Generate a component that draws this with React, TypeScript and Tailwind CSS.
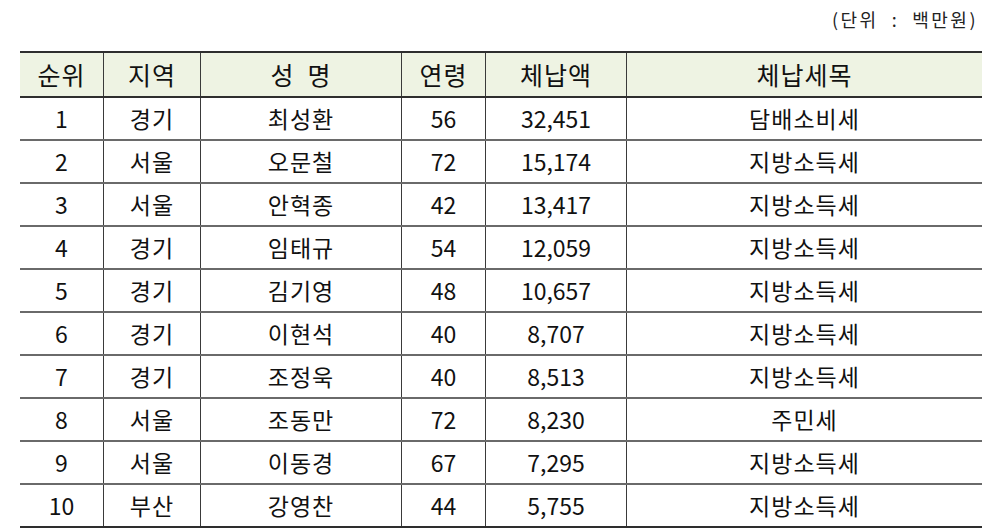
import React from "react";

const rows: [string, string, string, string, string, string][] = [
  ["1", "경기", "최성환", "56", "32,451", "담배소비세"],
  ["2", "서울", "오문철", "72", "15,174", "지방소득세"],
  ["3", "서울", "안혁종", "42", "13,417", "지방소득세"],
  ["4", "경기", "임태규", "54", "12,059", "지방소득세"],
  ["5", "경기", "김기영", "48", "10,657", "지방소득세"],
  ["6", "경기", "이현석", "40", "8,707", "지방소득세"],
  ["7", "경기", "조정욱", "40", "8,513", "지방소득세"],
  ["8", "서울", "조동만", "72", "8,230", "주민세"],
  ["9", "서울", "이동경", "67", "7,295", "지방소득세"],
  ["10", "부산", "강영찬", "44", "5,755", "지방소득세"],
];

const widths = ["w-[84px]", "w-[97px]", "w-[201px]", "w-[84px]", "w-[141px]", "flex-1"];
const korean = [false, true, true, false, false, true];

function Cell({ i, children, header }: { i: number; children: React.ReactNode; header?: boolean }) {
  return (
    <div
      className={`${widths[i]} ${i < 5 ? "border-r border-[#3a3a3a]" : ""} flex items-center justify-center ${
        header ? "text-[25px] tracking-[1px]" : korean[i] ? "text-[23px] tracking-[1px]" : "text-[23px]"
      }`}
    >
      {children}
    </div>
  );
}

export default function App() {
  const header = ["순위", "지역", "성\u00a0\u00a0명", "연령", "체납액", "체납세목"];
  return (
    <div
      className="w-[988px] h-[530px] bg-white text-[#111] overflow-hidden"
      style={{ fontFamily: '"Noto Sans CJK KR", "Noto Sans", sans-serif' }}
    >
      <div className="h-[51px] flex justify-end items-start pr-[10px] pt-[6px]">
        <span className="text-[18px] tracking-[2.5px] text-[#222]">(단위&nbsp;&nbsp;:&nbsp;&nbsp;백만원)</span>
      </div>
      <div className="ml-[20px] w-[962px] border-t-2 border-[#2e2e2e]">
        <div className="flex h-[45px] bg-[#eef3e3] border-b-2 border-[#2e2e2e] leading-none">
          {header.map((h, i) => (
            <Cell key={i} i={i} header>
              {h}
            </Cell>
          ))}
        </div>
        {rows.map((r, ri) => (
          <div
            key={ri}
            className={`flex h-[43px] leading-none ${
              ri === rows.length - 1 ? "border-b-2 border-[#2e2e2e]" : "border-b-2 border-[#6a6a6a]"
            }`}
          >
            {r.map((c, i) => (
              <Cell key={i} i={i}>
                {c}
              </Cell>
            ))}
          </div>
        ))}
      </div>
    </div>
  );
}
